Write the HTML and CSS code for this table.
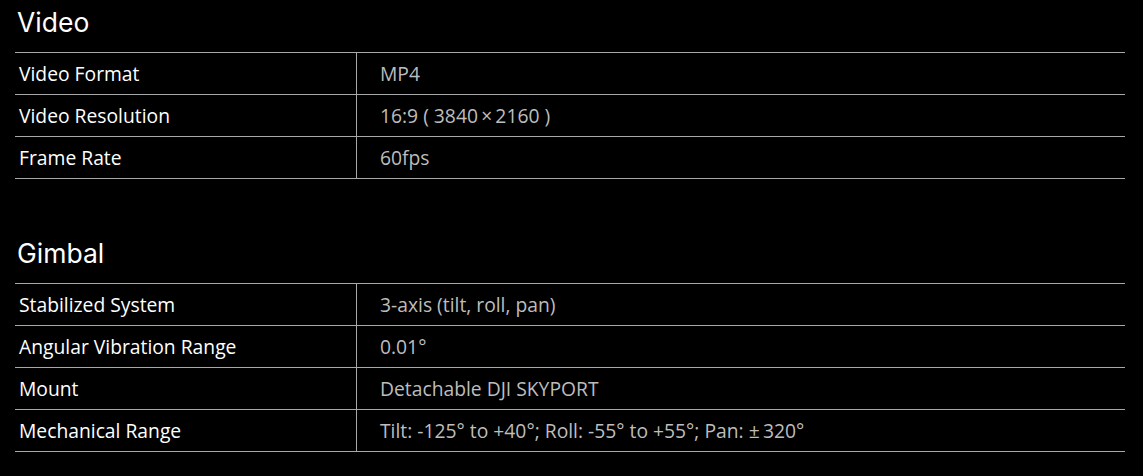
FILE: index.html
```html
<!DOCTYPE html>
<html>
<head>
<meta charset="utf-8">
<link rel="stylesheet" href="styles.css">
</head>
<body>
<div class="specs">
  <section class="group">
    <h2 class="group-title">Video</h2>
    <div class="table">
      <div class="row"><div class="key">Video Format</div><div class="val">MP4</div></div>
      <div class="row"><div class="key">Video Resolution</div><div class="val">16:9 ( 3840&#8201;×&#8201;2160 )</div></div>
      <div class="row"><div class="key">Frame Rate</div><div class="val">60fps</div></div>
    </div>
  </section>
  <section class="group group-next">
    <h2 class="group-title">Gimbal</h2>
    <div class="table">
      <div class="row"><div class="key">Stabilized System</div><div class="val">3-axis (tilt, roll, pan)</div></div>
      <div class="row"><div class="key">Angular Vibration Range</div><div class="val">0.01°</div></div>
      <div class="row"><div class="key">Mount</div><div class="val">Detachable DJI SKYPORT</div></div>
      <div class="row"><div class="key">Mechanical Range</div><div class="val">Tilt: -125° to +40°; Roll: -55° to +55°; Pan: ±&#8201;320°</div></div>
    </div>
  </section>
</div>
</body>
</html>
```
FILE: styles.css
```css
html, body {
  margin: 0;
  padding: 0;
  background: #000;
}
.specs {
  padding: 0 18px 0 15px;
  width: 1110px;
  font-family: "Open Sans", "Liberation Sans", sans-serif;
}
.group-title {
  margin: 0;
  height: 52px;
  padding-left: 2px;
  box-sizing: border-box;
  font-family: "Inter", "Noto Sans", sans-serif;
  font-weight: 400;
  font-size: 26.5px;
  line-height: 44px;
  color: #fff;
}
.group-next {
  margin-top: 52px;
}
.table {
  border-top: 1px solid #a8a8a8;
}
.row {
  display: grid;
  grid-template-columns: 342px 1fr;
  height: 42px;
  box-sizing: border-box;
  border-bottom: 1px solid #a8a8a8;
}
.key {
  border-right: 1px solid #a8a8a8;
  padding-left: 4px;
  font-size: 19.3px;
  line-height: 41px;
  color: #fff;
}
.val {
  padding-left: 23px;
  font-size: 19.3px;
  line-height: 41px;
  color: #bdbdbd;
}
```
